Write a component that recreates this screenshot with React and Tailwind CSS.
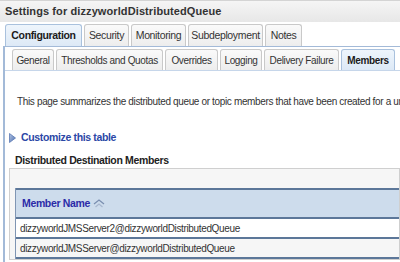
const TOP_TABS = [
  { label: "Configuration", w: "w-[77px]", active: true },
  { label: "Security", w: "w-[45px]" },
  { label: "Monitoring", w: "w-[55px]" },
  { label: "Subdeployment", w: "w-[75px]" },
  { label: "Notes", w: "w-[37px]" }
];

const SUB_TABS = [
  { label: "General", w: "w-[42px]" },
  { label: "Thresholds and Quotas", w: "w-[107px]" },
  { label: "Overrides", w: "w-[53px]" },
  { label: "Logging", w: "w-[42px]" },
  { label: "Delivery Failure", w: "w-[75px]" },
  { label: "Members", w: "w-[54px]", active: true }
];

const MEMBERS = [
  "dizzyworldJMSServer2@dizzyworldDistributedQueue",
  "dizzyworldJMSServer@dizzyworldDistributedQueue"
];

function Tab({ label, w, active, tall }) {
  const base = `${w} ${tall ? "h-[22px]" : "h-[21px]"} shrink-0 flex items-center justify-center rounded-t-[3px] border border-b-0 whitespace-nowrap`;
  if (active) {
    return (
      <div className={`${base} border-[#a9c1dd] bg-gradient-to-b from-[#eef5fc] to-[#dde9f6] font-bold text-[#1b1b1b]`}>
        {label}
      </div>
    );
  }
  return (
    <div className={`${base} border-[#c9c9c9] bg-gradient-to-b from-[#fafafa] to-[#ededed] text-[#333]`}>
      {label}
    </div>
  );
}

function SortIcon() {
  return (
    <svg width="12" height="9" viewBox="0 0 12 9" className="ml-[3px]">
      <path d="M1 5 L6 1 L11 5" fill="none" stroke="#7a8fb0" strokeWidth="1.3" />
      <path d="M2.5 8 L6 5 L9.5 8" fill="none" stroke="#a9b8cf" strokeWidth="1.3" />
    </svg>
  );
}

export default function App() {
  return (
    <div className="w-[400px] h-[262px] overflow-hidden bg-white text-[10px] leading-[15px] tracking-[-0.35px] text-[#333] font-['Liberation_Sans',Arial,sans-serif]">
      <div className="h-[22px] border-t border-[#d4d4d4] bg-gradient-to-b from-[#f5f5f5] to-[#e7e7e7] pl-[5px] flex items-center text-[11px] tracking-[0.1px] font-bold text-[#333]">
        Settings for dizzyworldDistributedQueue
      </div>

      <div className="flex items-end gap-[2px] pl-[5px] pt-[2px] text-[10.5px]">
        {TOP_TABS.map((tab) => (
          <Tab key={tab.label} {...tab} tall />
        ))}
      </div>

      <div className="ml-[3px] border-l-2 border-t border-[#a3bad8] h-[300px]">
        <div className="flex items-end gap-[2px] pl-[7px] pt-[2px] border-b border-[#c6d6ea]">
          {SUB_TABS.map((tab) => (
            <Tab key={tab.label} {...tab} />
          ))}
        </div>

        <p className="mt-[23px] pl-[12px] whitespace-nowrap text-[#333]">
          This page summarizes the distributed queue or topic members that have been created for a uniform distributed destination.
        </p>

        <div className="mt-[21px] pl-[4px] flex items-center gap-[5px] text-[10.5px] font-bold text-[#2b47a6]">
          <svg width="7" height="10" viewBox="0 0 7 10">
            <defs>
              <linearGradient id="tri" x1="0" y1="0" x2="1" y2="1">
                <stop offset="0" stopColor="#b3c5e4" />
                <stop offset="1" stopColor="#4d6fb0" />
              </linearGradient>
            </defs>
            <path d="M0.5 0.5 L6.5 5 L0.5 9.5 Z" fill="url(#tri)" stroke="#5a78b4" strokeWidth="0.8" />
          </svg>
          Customize this table
        </div>

        <div className="mt-[8px] pl-[10px] text-[10.5px] font-bold text-[#222]">
          Distributed Destination Members
        </div>

        <div className="ml-[4px] border border-[#cfcfcf] bg-[#f6f6f6] pt-[19px] pl-[5px]">
          <div className="border-l border-[#7f95b3] bg-white">
            <div className="h-[31px] border-t-2 border-b-2 border-[#5c7799] bg-[#cddcec] flex items-center pl-[6px] text-[10.5px] font-bold text-[#2b2ba8]">
              Member Name
              <SortIcon />
            </div>
            {MEMBERS.map((name, index) => (
              <div
                key={name}
                className={`h-[20px] flex items-center pl-[4px] whitespace-nowrap border-b-2 border-[#5c7799] ${index % 2 ? "bg-[#f6f6f6]" : "bg-white"}`}
              >
                {name}
              </div>
            ))}
          </div>
        </div>
      </div>
    </div>
  );
}
